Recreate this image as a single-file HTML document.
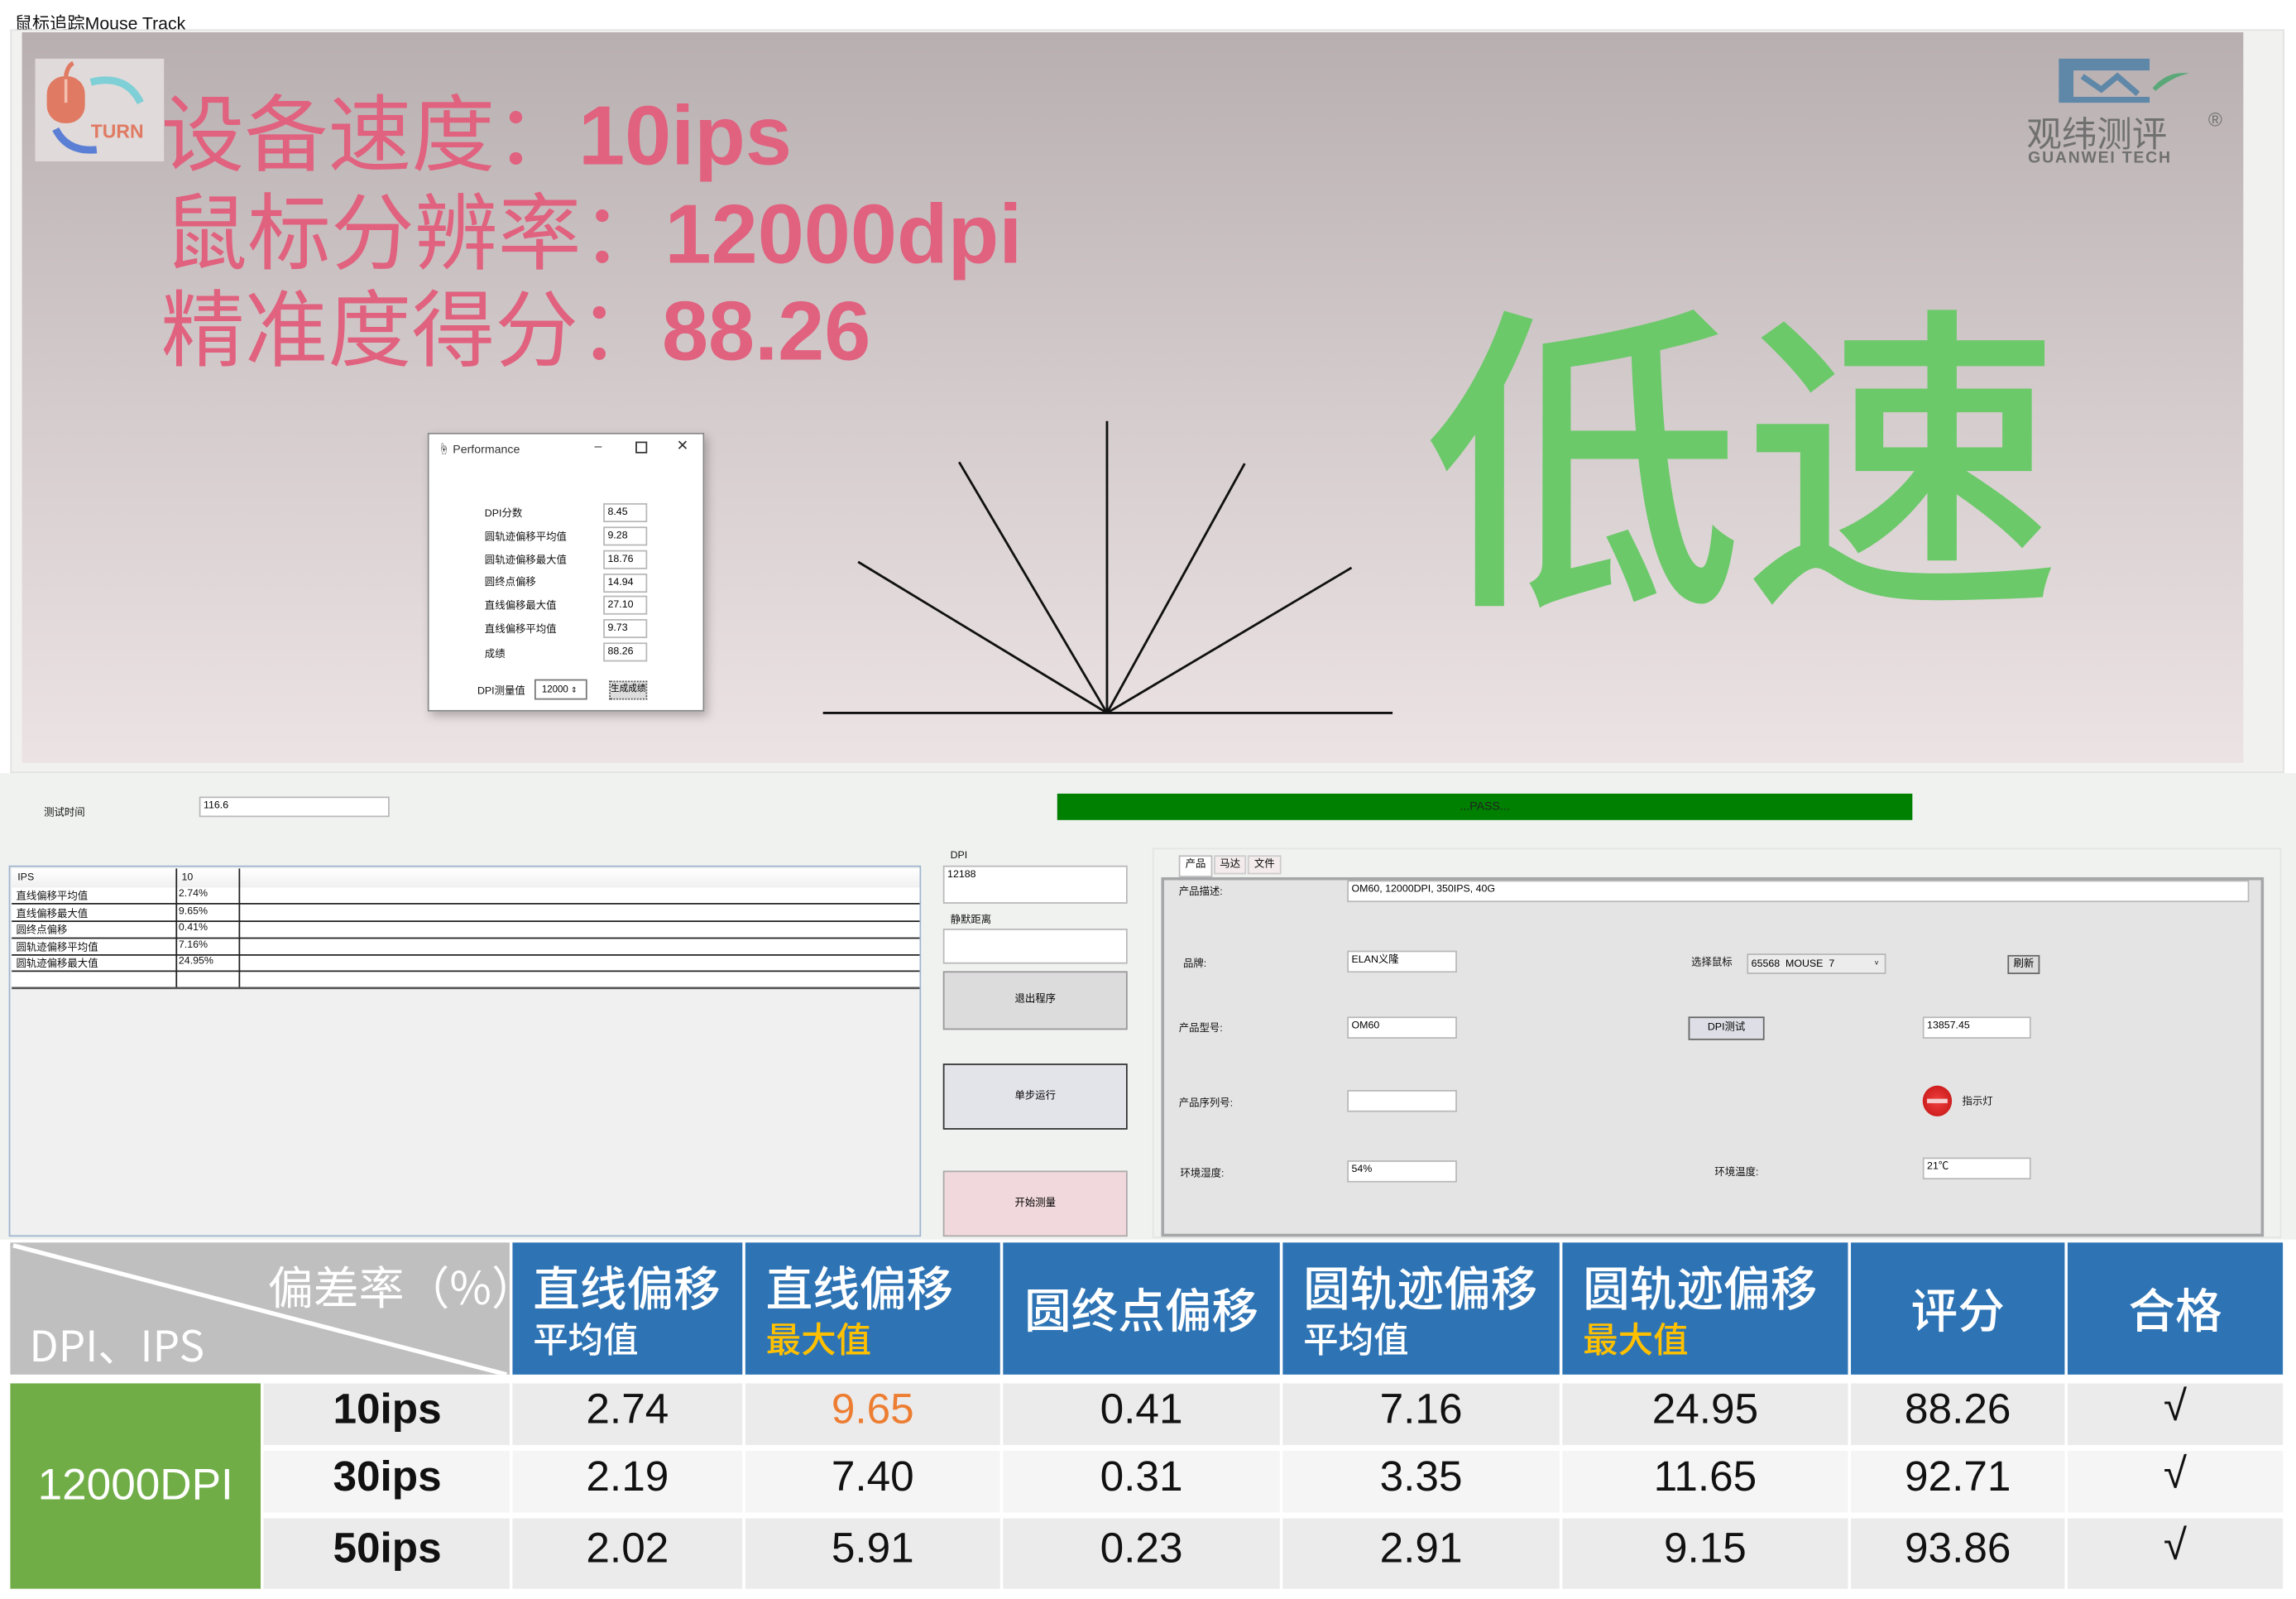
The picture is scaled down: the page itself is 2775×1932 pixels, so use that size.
<!DOCTYPE html>
<html><head><meta charset="utf-8">
<style>
html,body{margin:0;padding:0;width:2775px;height:1932px;overflow:hidden;background:#fff;}
#w{position:absolute;left:0;top:0;width:1568px;height:1090px;transform:scale(1.7698,1.7725);transform-origin:0 0;font-family:"Liberation Sans","Noto Sans CJK SC",sans-serif;background:#fff;}
.a{position:absolute;}
.t{position:absolute;white-space:nowrap;}
.in{position:absolute;background:#fff;border:1px solid #b8b8b8;box-sizing:border-box;font-size:7px;padding-left:2px;line-height:11px;}
.lb{position:absolute;font-size:7px;white-space:nowrap;color:#111;}
.pk{color:#e0627f;font-size:57px;line-height:57px;font-family:"Noto Sans CJK SC","Liberation Sans",sans-serif;}
.pk b{font-family:"Liberation Sans",sans-serif;font-weight:bold;}
.hc{position:absolute;background:#2e74b5;color:#fff;top:847px;height:90px;}
.h1{position:absolute;left:14px;top:10px;font-size:32px;line-height:40px;font-family:"Noto Sans CJK SC",sans-serif;font-weight:500;white-space:nowrap;}
.h2{position:absolute;left:14px;top:50px;font-size:24px;line-height:30px;font-family:"Noto Sans CJK SC",sans-serif;font-weight:500;white-space:nowrap;}
.hm{position:absolute;left:0;right:0;top:0;height:90px;line-height:90px;text-align:center;font-size:32px;font-family:"Noto Sans CJK SC",sans-serif;font-weight:500;}
.dc{position:absolute;text-align:center;font-size:29px;color:#111;}
</style></head><body><div id="w">
<!-- title -->
<div class="a" style="left:0;top:0;width:1568px;height:22px;background:#fff"></div>
<div class="t" style="left:10px;top:7px;font-size:12px;color:#111">鼠标追踪Mouse Track</div>
<div class="a" style="left:7px;top:20px;width:1553px;height:507px;background:#f1f1ef;border:1px solid #e2e2e2;box-sizing:border-box"></div>
<div class="a" style="left:15px;top:22px;width:1517px;height:498px;background:linear-gradient(#b8afb0,#d4cbcc 50%,#ece3e4)"></div>
<!-- left logo -->
<div class="a" style="left:24px;top:40px;width:88px;height:70px;background:#e0dada"></div>
<svg class="a" style="left:24px;top:40px" width="88" height="70" viewBox="0 0 88 70">
<rect x="8" y="12" width="26" height="32" rx="12" fill="#e07a62"/>
<line x1="21" y1="14" x2="21" y2="30" stroke="#f4c0b0" stroke-width="2"/>
<path d="M21 12 Q22 5 26 3" stroke="#e07a62" stroke-width="3" fill="none"/>
<path d="M38 16 Q62 10 72 30" stroke="#7ecfd6" stroke-width="5" fill="none"/>
<path d="M14 48 Q22 64 42 62" stroke="#5b7fd4" stroke-width="5" fill="none"/>
<text x="38" y="54" font-size="13" font-weight="bold" fill="#e07a62" font-family="Liberation Sans">TURN</text>
</svg>
<!-- pink text -->
<div class="t pk" style="left:110px;top:60px">设备速度：<b>10ips</b></div>
<div class="t pk" style="left:112px;top:127px">鼠标分辨率：<b>12000dpi</b></div>
<div class="t pk" style="left:110px;top:193px">精准度得分：<b>88.26</b></div>
<!-- green big -->
<div class="t" style="left:972px;top:170px;font-size:218px;line-height:260px;color:#6cc96a;font-family:'Noto Sans CJK SC',sans-serif;font-weight:500">低速</div>
<!-- right logo -->
<svg class="a" style="left:1380px;top:38px" width="145" height="78" viewBox="0 0 145 78">
<path d="M26 2 H88 V10 H36 V28 H88 V32 H26 Z" fill="#5f88a8"/>
<path d="M42 14 L55 23 L66 14 L80 26" stroke="#5f88a8" stroke-width="4" fill="none"/>
<path d="M90 22 Q100 10 115 12 Q104 14 92 24Z" fill="#5aa878"/>
<text x="4" y="62" font-size="24" fill="#707070" font-family="Noto Sans CJK SC">观纬测评</text>
<text x="5" y="73" font-size="11" fill="#707070" font-family="Liberation Sans" font-weight="bold" letter-spacing="1">GUANWEI TECH</text>
<text x="128" y="48" font-size="13" fill="#707070" font-family="Liberation Sans">®</text>
</svg>
<!-- lines -->
<svg class="a" style="left:0;top:0" width="1568" height="530">
<g stroke="#111" stroke-width="1.6">
<line x1="562" y1="486" x2="951" y2="486"/>
<line x1="756" y1="486" x2="756" y2="287"/>
<line x1="756" y1="486" x2="655" y2="315"/>
<line x1="756" y1="486" x2="850" y2="316"/>
<line x1="756" y1="486" x2="586" y2="383"/>
<line x1="756" y1="486" x2="923" y2="387"/>
</g></svg>
<!-- Performance dialog -->
<div class="a" style="left:292px;top:295px;width:189px;height:190px;background:#fff;border:1px solid #888;box-sizing:border-box;box-shadow:2px 3px 6px rgba(0,0,0,.25)"></div>
<div class="lb" style="left:299px;top:301px;font-size:8px;color:#333">☝ Performance</div>
<div class="lb" style="left:406px;top:299px;font-size:9px;color:#333">–</div>
<div class="a" style="left:434px;top:301px;width:6px;height:6px;border:1px solid #333"></div>
<div class="lb" style="left:462px;top:299px;font-size:10px;color:#333">✕</div>
<div class="lb" style="left:331px;top:345px">DPI分数</div>
<div class="lb" style="left:331px;top:361px">圆轨迹偏移平均值</div>
<div class="lb" style="left:331px;top:377px">圆轨迹偏移最大值</div>
<div class="lb" style="left:331px;top:392px">圆终点偏移</div>
<div class="lb" style="left:331px;top:408px">直线偏移最大值</div>
<div class="lb" style="left:331px;top:424px">直线偏移平均值</div>
<div class="lb" style="left:331px;top:441px">成绩</div>
<div class="in" style="left:412px;top:343px;width:30px;height:13px">8.45</div>
<div class="in" style="left:412px;top:359px;width:30px;height:13px">9.28</div>
<div class="in" style="left:412px;top:375px;width:30px;height:13px">18.76</div>
<div class="in" style="left:412px;top:391px;width:30px;height:13px">14.94</div>
<div class="in" style="left:412px;top:406px;width:30px;height:13px">27.10</div>
<div class="in" style="left:412px;top:422px;width:30px;height:13px">9.73</div>
<div class="in" style="left:412px;top:438px;width:30px;height:13px">88.26</div>
<div class="lb" style="left:326px;top:466px">DPI测量值</div>
<div class="in" style="left:365px;top:463px;width:36px;height:14px;font-size:6.5px;padding-left:4px;border-color:#777;line-height:13px">12000 <span style="font-size:5px">⇕</span></div>
<div class="a" style="left:416px;top:464px;width:26px;height:13px;background:#ddd;border:1px dotted #555;box-sizing:border-box;font-size:6px;line-height:11px;text-align:center">生成成绩</div>
<!-- middle area -->
<div class="a" style="left:0;top:527px;width:1568px;height:320px;background:#f0f2f0"></div>
<div class="lb" style="left:30px;top:549px">测试时间</div>
<div class="in" style="left:136px;top:543px;width:130px;height:14px;font-size:7px">116.6</div>
<div class="a" style="left:722px;top:541px;width:584px;height:18px;background:#008000;text-align:center;font-size:8px;line-height:18px;color:#222">...PASS...</div>
<!-- left grid -->
<div class="a" style="left:6px;top:590px;width:623px;height:253px;background:#f0f0f0;border:1px solid #9fb5cf;box-sizing:border-box"></div>
<div class="a" style="left:8px;top:592px;width:620px;height:81px;background:#fff"></div>
<div class="a" style="left:8px;top:592px;width:620px;height:13px;background:linear-gradient(#fff,#f0f0f0)"></div>
<svg class="a" style="left:0;top:0" width="640" height="680">
<g stroke="#222" stroke-width="1">
<line x1="8" y1="616" x2="628" y2="616"/><line x1="8" y1="628" x2="628" y2="628"/>
<line x1="8" y1="639.5" x2="628" y2="639.5"/><line x1="8" y1="651" x2="628" y2="651"/>
<line x1="8" y1="662" x2="628" y2="662"/>
<line x1="120.5" y1="592" x2="120.5" y2="673"/><line x1="163.5" y1="592" x2="163.5" y2="673"/>
</g>
<line x1="8" y1="673.5" x2="628" y2="673.5" stroke="#555" stroke-width="1.5"/>
</svg>
<div class="lb" style="left:12px;top:595px">IPS</div><div class="lb" style="left:124px;top:595px">10</div>
<div class="lb" style="left:11px;top:606px">直线偏移平均值</div><div class="lb" style="left:122px;top:606px">2.74%</div>
<div class="lb" style="left:11px;top:618px">直线偏移最大值</div><div class="lb" style="left:122px;top:618px">9.65%</div>
<div class="lb" style="left:11px;top:629px">圆终点偏移</div><div class="lb" style="left:122px;top:629px">0.41%</div>
<div class="lb" style="left:11px;top:641px">圆轨迹偏移平均值</div><div class="lb" style="left:122px;top:641px">7.16%</div>
<div class="lb" style="left:11px;top:652px">圆轨迹偏移最大值</div><div class="lb" style="left:122px;top:652px">24.95%</div>
<!-- middle column -->
<div class="lb" style="left:649px;top:580px">DPI</div>
<div class="in" style="left:644px;top:590px;width:126px;height:26px;line-height:12px">12188</div>
<div class="lb" style="left:649px;top:622px">静默距离</div>
<div class="in" style="left:644px;top:633px;width:126px;height:24px"></div>
<div class="a" style="left:644px;top:662px;width:126px;height:40px;background:#dcdcdc;border:1px solid #999;box-sizing:border-box;font-size:7px;line-height:38px;text-align:center">退出程序</div>
<div class="a" style="left:644px;top:725px;width:126px;height:45px;background:#e3e3ea;border:1px solid #333;box-sizing:border-box;font-size:7px;line-height:43px;text-align:center">单步运行</div>
<div class="a" style="left:644px;top:798px;width:126px;height:45px;background:#f1d8dc;border:1px solid #aaa;box-sizing:border-box;font-size:7px;line-height:43px;text-align:center">开始测量</div>
<!-- right panel -->
<div class="a" style="left:787px;top:578px;width:771px;height:266px;border:1px solid #e4e6e4;box-sizing:border-box"></div>
<div class="a" style="left:805px;top:583px;width:23px;height:15px;background:#fff;border:1px solid #bbb;box-sizing:border-box;font-size:7px;text-align:center;line-height:12px">产品</div>
<div class="a" style="left:829px;top:583px;width:22px;height:13px;background:#f4ecec;border:1px solid #ccc;box-sizing:border-box;font-size:7px;text-align:center;line-height:11px">马达</div>
<div class="a" style="left:852px;top:583px;width:23px;height:13px;background:#f4ecec;border:1px solid #ccc;box-sizing:border-box;font-size:7px;text-align:center;line-height:11px">文件</div>
<div class="a" style="left:793px;top:598px;width:753px;height:245px;background:#e4e4e4;border:2px solid #a4a6a8;box-sizing:border-box"></div>
<div class="lb" style="left:805px;top:603px">产品描述:</div>
<div class="in" style="left:920px;top:600px;width:616px;height:15px">OM60, 12000DPI, 350IPS, 40G</div>
<div class="lb" style="left:808px;top:652px">品牌:</div>
<div class="in" style="left:920px;top:648px;width:75px;height:15px">ELAN义隆</div>
<div class="lb" style="left:1155px;top:651px">选择鼠标</div>
<div class="in" style="left:1193px;top:650px;width:95px;height:14px;background:#ececec;line-height:13px">65568&nbsp; MOUSE&nbsp; 7<span style="position:absolute;right:4px;font-size:5px">˅</span></div>
<div class="a" style="left:1371px;top:651px;width:22px;height:13px;background:#ddd;border:1px solid #666;box-sizing:border-box;font-size:7px;text-align:center;line-height:11px">刷新</div>
<div class="lb" style="left:805px;top:696px">产品型号:</div>
<div class="in" style="left:920px;top:693px;width:75px;height:15px">OM60</div>
<div class="a" style="left:1153px;top:693px;width:52px;height:16px;background:#dedfe6;border:1px solid #666;box-sizing:border-box;font-size:7px;text-align:center;line-height:14px">DPI测试</div>
<div class="in" style="left:1313px;top:693px;width:74px;height:15px">13857.45</div>
<div class="lb" style="left:805px;top:747px">产品序列号:</div>
<div class="in" style="left:920px;top:743px;width:75px;height:15px"></div>
<div class="a" style="left:1313px;top:740px;width:20px;height:21px;border-radius:50%;background:radial-gradient(#f04040,#c01010);"></div>
<div class="a" style="left:1316px;top:749px;width:14px;height:3px;background:#f4d0d0"></div>
<div class="lb" style="left:1340px;top:746px">指示灯</div>
<div class="lb" style="left:806px;top:795px">环境湿度:</div>
<div class="in" style="left:920px;top:791px;width:75px;height:15px">54%</div>
<div class="lb" style="left:1171px;top:794px">环境温度:</div>
<div class="in" style="left:1313px;top:789px;width:74px;height:15px">21℃</div>
<!-- bottom table -->
<div class="a" style="left:0;top:845px;width:1568px;height:245px;background:#fff"></div>
<div class="a" style="left:7px;top:847px;width:341px;height:90px;background:#bfbfbf"></div>
<svg class="a" style="left:7px;top:847px" width="341" height="90"><line x1="2" y1="2" x2="339" y2="90" stroke="#fff" stroke-width="3"/></svg>
<div class="t" style="left:183px;top:853px;font-size:31px;color:#fff;font-family:'Noto Sans CJK SC',sans-serif">偏差率（%）</div>
<div class="t" style="left:20px;top:895px;font-size:29px;color:#fff;font-family:'Noto Sans CJK SC',sans-serif">DPI、IPS</div>
<div class="hc" style="left:350px;width:157px"><div class="h1">直线偏移</div><div class="h2">平均值</div></div>
<div class="hc" style="left:509px;width:174px"><div class="h1">直线偏移</div><div class="h2" style="color:#ffc000">最大值</div></div>
<div class="hc" style="left:685px;width:189px"><div class="hm">圆终点偏移</div></div>
<div class="hc" style="left:876px;width:189px"><div class="h1">圆轨迹偏移</div><div class="h2">平均值</div></div>
<div class="hc" style="left:1067px;width:195px"><div class="h1">圆轨迹偏移</div><div class="h2" style="color:#ffc000">最大值</div></div>
<div class="hc" style="left:1264px;width:146px"><div class="hm">评分</div></div>
<div class="hc" style="left:1412px;width:147px"><div class="hm">合格</div></div>
<div class="a" style="left:7px;top:943px;width:171px;height:140px;background:#70ad47;color:#fff;font-size:30px;line-height:140px;text-align:center">12000DPI</div>
<div class="a" style="left:180px;top:943px;width:1379px;height:42px;background:#ebebeb"></div>
<div class="a" style="left:180px;top:989px;width:1379px;height:42px;background:#f5f5f5"></div>
<div class="a" style="left:180px;top:1035px;width:1379px;height:48px;background:#ebebeb"></div>
<svg class="a" style="left:0;top:940px" width="1568" height="146"><g stroke="#fff" stroke-width="2">
<line x1="349" y1="0" x2="349" y2="146"/><line x1="508" y1="0" x2="508" y2="146"/><line x1="684" y1="0" x2="684" y2="146"/>
<line x1="875" y1="0" x2="875" y2="146"/><line x1="1066" y1="0" x2="1066" y2="146"/><line x1="1263" y1="0" x2="1263" y2="146"/><line x1="1411" y1="0" x2="1411" y2="146"/></g></svg>
<div id="rows"></div>
<div class="dc" style="left:180px;width:169px;top:945px;font-weight:bold">10ips</div>
<div class="dc" style="left:180px;width:169px;top:991px;font-weight:bold">30ips</div>
<div class="dc" style="left:180px;width:169px;top:1040px;font-weight:bold">50ips</div>
<div class="dc" style="left:350px;width:157px;top:945px">2.74</div>
<div class="dc" style="left:350px;width:157px;top:991px">2.19</div>
<div class="dc" style="left:350px;width:157px;top:1040px">2.02</div>
<div class="dc" style="left:509px;width:174px;top:945px;color:#ed7d31">9.65</div>
<div class="dc" style="left:509px;width:174px;top:991px">7.40</div>
<div class="dc" style="left:509px;width:174px;top:1040px">5.91</div>
<div class="dc" style="left:685px;width:189px;top:945px">0.41</div>
<div class="dc" style="left:685px;width:189px;top:991px">0.31</div>
<div class="dc" style="left:685px;width:189px;top:1040px">0.23</div>
<div class="dc" style="left:876px;width:189px;top:945px">7.16</div>
<div class="dc" style="left:876px;width:189px;top:991px">3.35</div>
<div class="dc" style="left:876px;width:189px;top:1040px">2.91</div>
<div class="dc" style="left:1067px;width:195px;top:945px">24.95</div>
<div class="dc" style="left:1067px;width:195px;top:991px">11.65</div>
<div class="dc" style="left:1067px;width:195px;top:1040px">9.15</div>
<div class="dc" style="left:1264px;width:146px;top:945px">88.26</div>
<div class="dc" style="left:1264px;width:146px;top:991px">92.71</div>
<div class="dc" style="left:1264px;width:146px;top:1040px">93.86</div>
<div class="dc" style="left:1412px;width:147px;top:943px">√</div>
<div class="dc" style="left:1412px;width:147px;top:989px">√</div>
<div class="dc" style="left:1412px;width:147px;top:1038px">√</div>
</div></body></html>
